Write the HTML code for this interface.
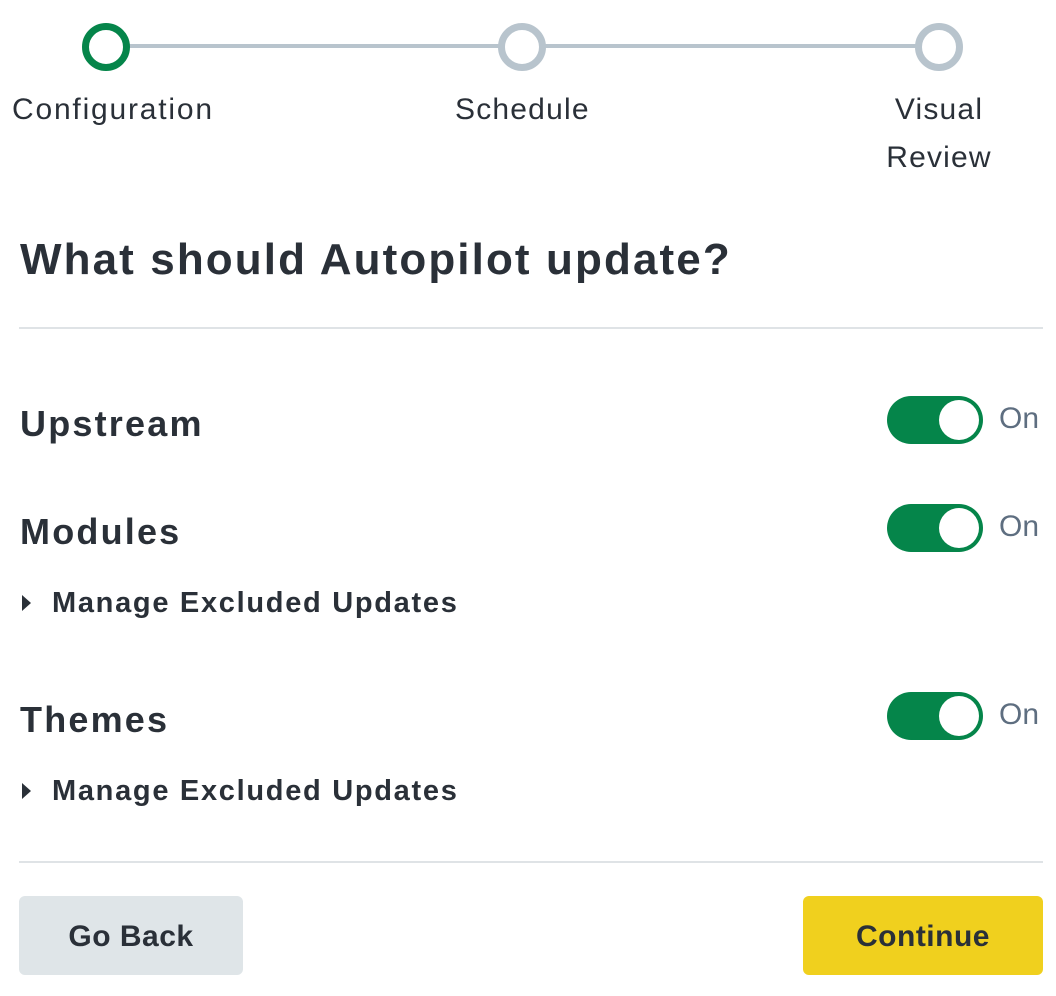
<!DOCTYPE html>
<html><head><style>
body{margin:0;width:1056px;height:996px;background:#fff;font-family:"Liberation Sans",sans-serif;color:#2a3038;position:relative;overflow:hidden}
.a{position:absolute;white-space:nowrap}
.c{position:absolute;width:34px;height:34px;border-radius:50%;border:7px solid #b8c4cd;background:#fff;top:23px}
.lbl{font-size:30px;line-height:48px;letter-spacing:1.2px}
.h{font-size:36px;font-weight:bold;letter-spacing:2.2px}
.m{font-size:29px;font-weight:bold;letter-spacing:1.7px}
.t{position:absolute;left:887px;width:96px;height:48px;border-radius:24px;background:#05854a}
.t::after{content:"";position:absolute;right:4px;top:4px;width:40px;height:40px;border-radius:50%;background:#fff}
.on{position:absolute;left:999px;font-size:30px;color:#5e6e80}
.tri{position:absolute;left:22px;width:0;height:0;border-top:8px solid transparent;border-bottom:8px solid transparent;border-left:9px solid #2a3038}
.hr{position:absolute;left:19px;width:1024px;height:2px;background:#dfe3e6}
.btn{position:absolute;top:896px;height:79px;border-radius:6px;font-size:30px;font-weight:bold;text-align:center;line-height:81px;letter-spacing:0.5px}
</style></head><body>
<div class="a" style="left:113px;top:44px;width:826px;height:4px;background:#b8c4cd"></div>
<div class="c" style="left:82px;border-color:#05854a"></div>
<div class="c" style="left:498px"></div>
<div class="c" style="left:915px"></div>
<div class="a lbl" style="left:12px;top:86px;letter-spacing:1.8px">Configuration</div>
<div class="a lbl" style="left:455px;top:86px">Schedule</div>
<div class="a lbl" style="left:883px;top:86px;text-align:center;width:112px;white-space:normal">Visual Review</div>
<div class="a" style="left:20px;top:235px;font-size:44px;font-weight:bold;letter-spacing:2.1px">What should Autopilot update?</div>
<div class="hr" style="top:327px"></div>
<div class="a h" style="left:20px;top:403px">Upstream</div>
<div class="t" style="top:396px"></div><div class="on" style="top:402px">On</div>
<div class="a h" style="left:20px;top:511px">Modules</div>
<div class="t" style="top:504px"></div><div class="on" style="top:510px">On</div>
<div class="tri" style="top:595px"></div>
<div class="a m" style="left:52px;top:587px">Manage Excluded Updates</div>
<div class="a h" style="left:20px;top:699px">Themes</div>
<div class="t" style="top:692px"></div><div class="on" style="top:698px">On</div>
<div class="tri" style="top:783px"></div>
<div class="a m" style="left:52px;top:775px">Manage Excluded Updates</div>
<div class="hr" style="top:861px"></div>
<div class="btn" style="left:19px;width:224px;background:#dfe5e8">Go Back</div>
<div class="btn" style="left:803px;width:240px;background:#f0d01e">Continue</div>
</body></html>
